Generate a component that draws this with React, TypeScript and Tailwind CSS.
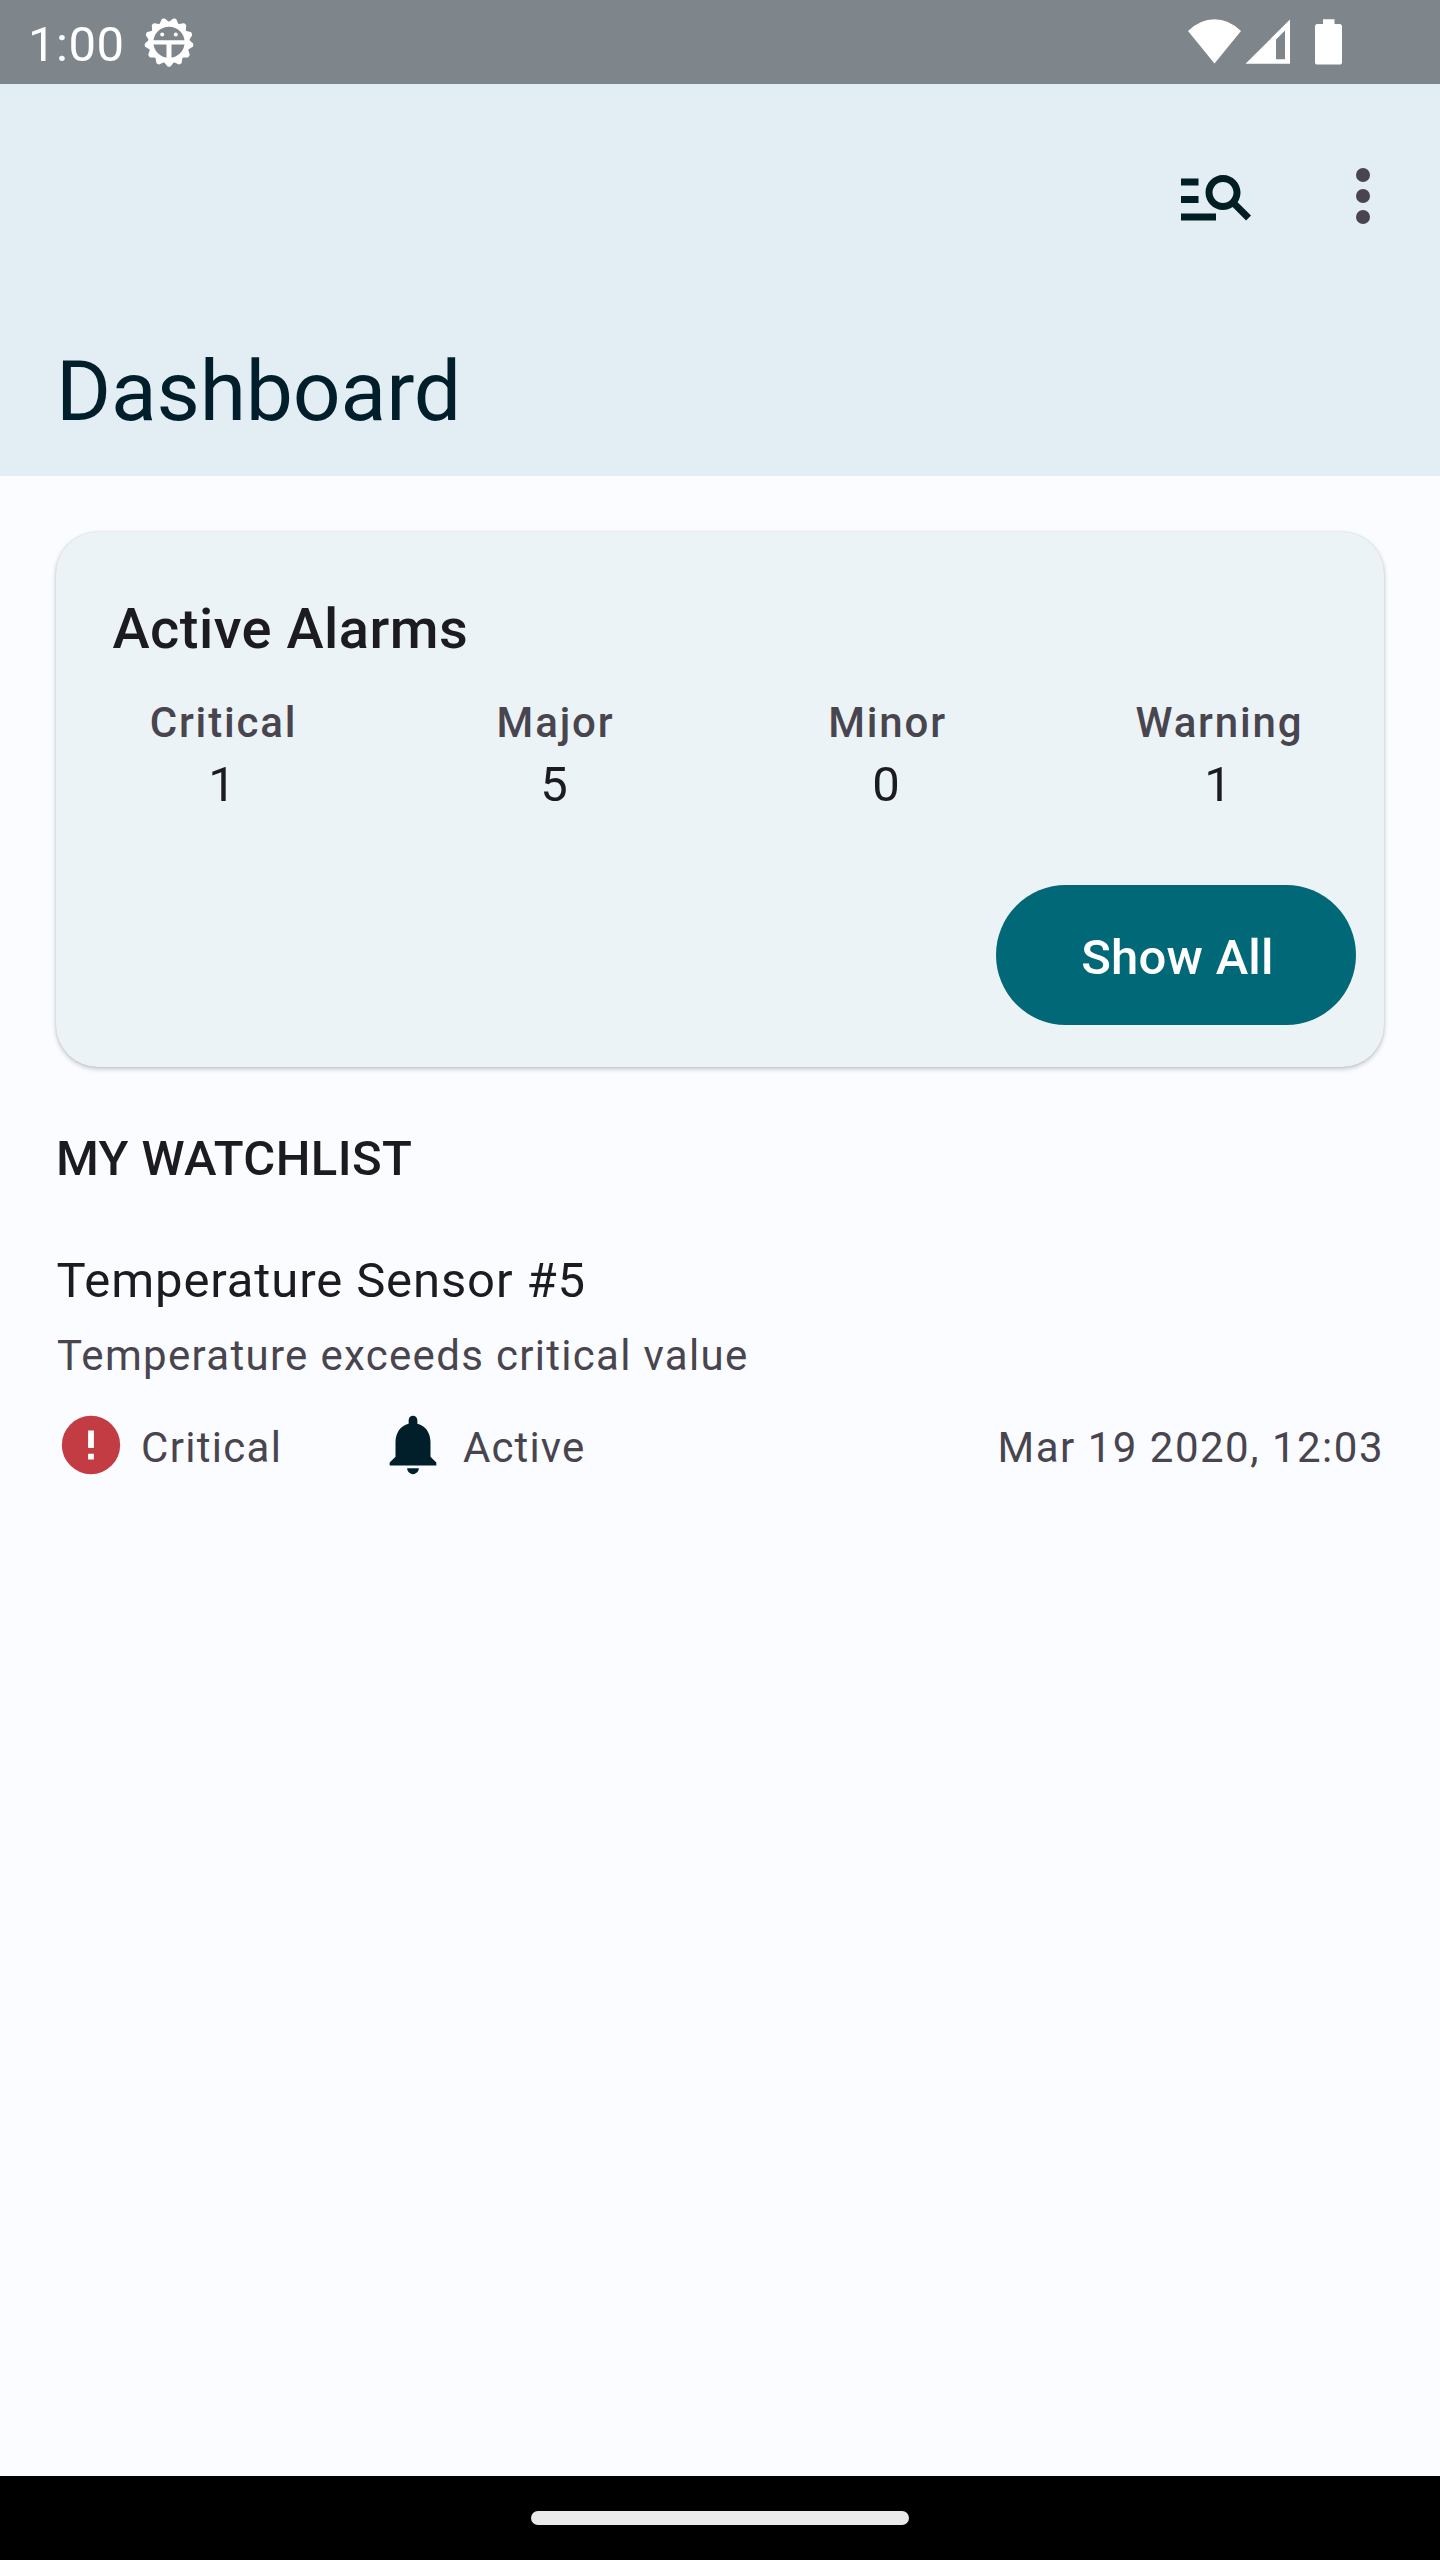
import React from "react";

const counts = [
  { label: "Critical", value: 1 },
  { label: "Major", value: 5 },
  { label: "Minor", value: 0 },
  { label: "Warning", value: 1 },
];

const teeth = Array.from({ length: 13 }, (_, i) => 180 + (i * 360) / 13);

function GearIcon() {
  return (
    <svg className="ml-[18.5px] size-[52px]" viewBox="-26 -26.3 52 52" fill="none" stroke="#fff">
      <circle r="18.2" strokeWidth="5.1" />
      {teeth.map((a) => (
        <path
          key={a}
          d="M-3.2 -19.5L-0.7 -22.9H0.7L3.2 -19.5Z"
          fill="#fff"
          strokeWidth="3"
          strokeLinejoin="round"
          transform={`rotate(${a})`}
        />
      ))}
      <path d="M-17 0.1H17" strokeWidth="4.2" />
      <path d="M0 1V18" strokeWidth="5" />
      <circle cx="-6.8" cy="-7.8" r="2" fill="#fff" stroke="none" />
      <circle cx="6.8" cy="-7.8" r="2" fill="#fff" stroke="none" />
    </svg>
  );
}

function StatusIcons() {
  return (
    <svg className="mr-[98px] h-[46px] w-[154px]" viewBox="1188 19 154 46" fill="#fff">
      <path d="M1188 31Q1200 19.2 1214.5 19.2T1241 31L1214.5 63.4Z" />
      <path fillRule="evenodd" d="M1245.5 63.7L1290 19.5V63.7ZM1276 39.5V59.2H1285V30.5Z" />
      <path d="M1323 19.2H1334.5V24H1339.5Q1342 24 1342 26.5V62Q1342 64.6 1339.5 64.6H1317.5Q1315 64.6 1315 62V26.5Q1315 24 1317.5 24H1323Z" />
    </svg>
  );
}

export default function App() {
  return (
    <div className="flex h-[2560px] w-[1440px] flex-col bg-[#fbfcff] font-[Roboto,sans-serif] text-[#1c1b1f]">
      <div className="flex h-[84px] items-center bg-[#7f868b] pl-[28px] text-white">
        <span className="pt-[6px] text-[49px] leading-[58px] tracking-[0.5px]">1:00</span>
        <GearIcon />
        <div className="grow" />
        <StatusIcons />
      </div>

      <header className="flex h-[392px] flex-col justify-between bg-[#e2eef3] text-[#001f2a]">
        <div className="flex h-[224px] items-center justify-end">
          <svg className="size-[84px]" viewBox="0 0 24 24" fill="#001f25">
            <path d="M7 9H2V7h5v2zm0 3H2v2h5v-2zm13.590 7-3.830-3.830c-.8.520-1.740.83-2.760.83-2.760 0-5-2.240-5-5s2.240-5 5-5 5 2.240 5 5c0 1.020-.31 1.960-.83 2.750L22 17.590 20.590 19zM17 11c0-1.650-1.350-3-3-3s-3 1.350-3 3 1.350 3 3 3 3-1.350 3-3zM2 19h10v-2H2v2z" />
          </svg>
          <svg className="mr-[35px] ml-[63px] size-[84px]" viewBox="0 0 24 24" fill="#49454f">
            <circle cx="12" cy="6" r="2" />
            <circle cx="12" cy="12" r="2" />
            <circle cx="12" cy="18" r="2" />
          </svg>
        </div>
        <h1 className="pb-[35px] pl-[56px] text-[84px] leading-[98px] tracking-[-0.15px]">Dashboard</h1>
      </header>

      <main className="grow px-[56px] pt-[56px]">
        <section className="flex h-[535px] flex-col rounded-[42px] bg-[#ebf3f7] pt-[55px] shadow-[0_2px_5px_rgba(0,0,0,0.22),0_0_2px_rgba(0,0,0,0.12)]">
          <h2 className="pl-[56.5px] text-[56px] leading-[84px] font-medium tracking-[0.48px]">Active Alarms</h2>
          <div className="mt-[24px] grid grid-cols-4 text-center">
            {counts.map((c) => (
              <div key={c.label}>
                <div className="pl-[3px] text-[42px] leading-[56px] font-medium tracking-[1.85px] text-[#49454f]">
                  {c.label}
                </div>
                <div className="text-[49px] leading-[67px]">{c.value}</div>
              </div>
            ))}
          </div>
          <button className="mt-auto mr-[28px] mb-[42px] h-[140px] w-[360px] self-end rounded-full bg-[#006876] pt-[5px] pl-[3px] text-[49px] font-medium tracking-[0.25px] text-white">
            Show All
          </button>
        </section>

        <h3 className="mt-[57px] text-[49px] leading-[70px] font-medium tracking-[0.38px]">MY WATCHLIST</h3>

        <article className="mt-[52px]">
          <div className="pl-[0.5px] text-[49px] leading-[70px] tracking-[0.89px]">Temperature Sensor #5</div>
          <div className="mt-[12px] pl-[1px] text-[42px] leading-[56px] tracking-[1.31px] text-[#49454f]">
            Temperature exceeds critical value
          </div>
          <div className="mt-[26px] flex h-[70px] items-center text-[42px] leading-[56px] tracking-[1.3px] text-[#49454f]">
            <svg className="size-[70px]" viewBox="0 0 24 24" fill="#c33c44">
              <circle cx="12" cy="12" r="10" />
              <path d="M11 7h2v6h-2zM11 15h2v2h-2z" fill="#fff" />
            </svg>
            <span className="ml-[15px] w-[237px] pt-[6px]">Critical</span>
            <svg className="size-[70px]" viewBox="0 0 24 24" fill="#001f2a">
              <path d="M12 22c1.100 0 2-.9 2-2h-4c0 1.100.89 2 2 2zm6-6v-5c0-3.070-1.640-5.640-4.500-6.320V3.500c0-.83-.67-1.500-1.500-1.500s-1.500.67-1.500 1.500v1.180C7.630 5.360 6 7.920 6 11v5l-2 2v1h16v-1l-2-2z" />
            </svg>
            <span className="ml-[15px] pt-[6px] tracking-[1.1px]">Active</span>
            <span className="ml-auto pt-[6px] tracking-[1.5px]">Mar 19 2020, 12:03</span>
          </div>
        </article>
      </main>

      <footer className="flex h-[84px] items-center justify-center bg-black">
        <div className="h-[14px] w-[378px] rounded-full bg-[#ebebeb]" />
      </footer>
    </div>
  );
}
